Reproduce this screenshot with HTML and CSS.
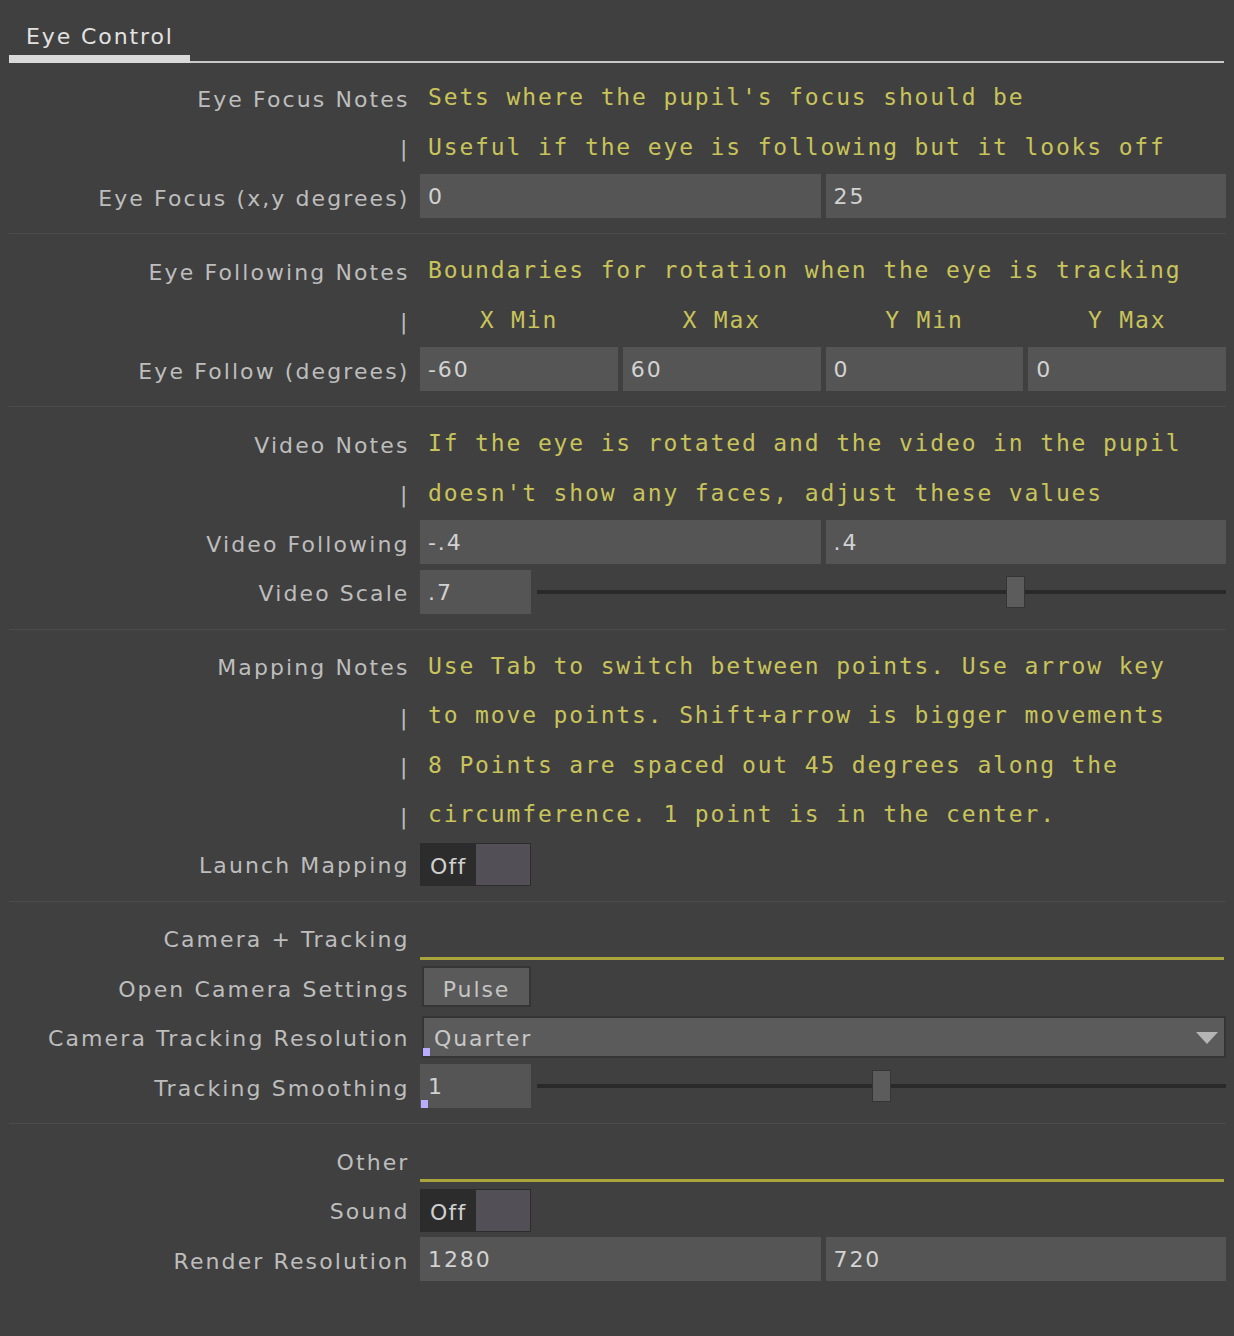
FILE: index.html
```html
<!DOCTYPE html>
<html>
<head>
<meta charset="utf-8">
<link rel="stylesheet" href="styles.css">
</head>
<body>
<div class="panel">
  <div class="tabbar"><div class="tab">Eye Control</div></div>

  <section class="sec">
    <div class="lbl">Eye Focus Notes</div>
    <div class="note">Sets where the pupil's focus should be</div>
    <div class="lbl">|</div>
    <div class="note">Useful if the eye is following but it looks off</div>
    <div class="lbl">Eye Focus (x,y degrees)</div>
    <div class="fields two"><div class="fld">0</div><div class="fld">25</div></div>
  </section>
  <div class="sep"></div>

  <section class="sec">
    <div class="lbl">Eye Following Notes</div>
    <div class="note">Boundaries for rotation when the eye is tracking</div>
    <div class="lbl">|</div>
    <div class="note cols"><span>X Min</span><span>X Max</span><span>Y Min</span><span>Y Max</span></div>
    <div class="lbl">Eye Follow (degrees)</div>
    <div class="fields four"><div class="fld">-60</div><div class="fld">60</div><div class="fld">0</div><div class="fld">0</div></div>
  </section>
  <div class="sep"></div>

  <section class="sec">
    <div class="lbl">Video Notes</div>
    <div class="note">If the eye is rotated and the video in the pupil</div>
    <div class="lbl">|</div>
    <div class="note">doesn't show any faces, adjust these values</div>
    <div class="lbl">Video Following</div>
    <div class="fields two"><div class="fld">-.4</div><div class="fld">.4</div></div>
    <div class="lbl">Video Scale</div>
    <div class="slider">
      <div class="fld">.7</div>
      <div class="track"><div class="handle" style="left:calc((100% - 19px) * 0.7)"></div></div>
    </div>
  </section>
  <div class="sep"></div>

  <section class="sec">
    <div class="lbl">Mapping Notes</div>
    <div class="note">Use Tab to switch between points. Use arrow key</div>
    <div class="lbl">|</div>
    <div class="note">to move points. Shift+arrow is bigger movements</div>
    <div class="lbl">|</div>
    <div class="note">8 Points are spaced out 45 degrees along the</div>
    <div class="lbl">|</div>
    <div class="note">circumference. 1 point is in the center.</div>
    <div class="lbl">Launch Mapping</div>
    <div class="toggle"><span class="tgl-txt">Off</span><span class="tgl-box"></span></div>
  </section>
  <div class="sep"></div>

  <section class="sec">
    <div class="lbl">Camera + Tracking</div>
    <div class="hdrline"></div>
    <div class="lbl">Open Camera Settings</div>
    <div class="pulse">Pulse</div>
    <div class="lbl">Camera Tracking Resolution</div>
    <div class="dropdown"><span class="mark"></span><span class="dd-txt">Quarter</span><span class="tri"></span></div>
    <div class="lbl">Tracking Smoothing</div>
    <div class="slider">
      <div class="fld has-mark"><span class="mark"></span>1</div>
      <div class="track"><div class="handle" style="left:calc((100% - 19px) * 0.5)"></div></div>
    </div>
  </section>
  <div class="sep"></div>

  <section class="sec">
    <div class="lbl">Other</div>
    <div class="hdrline"></div>
    <div class="lbl">Sound</div>
    <div class="toggle"><span class="tgl-txt">Off</span><span class="tgl-box"></span></div>
    <div class="lbl">Render Resolution</div>
    <div class="fields two"><div class="fld">1280</div><div class="fld">720</div></div>
  </section>
</div>
</body>
</html>
```

FILE: styles.css
```css
html, body {
  margin: 0;
  padding: 0;
  background: #404040;
}
body {
  width: 1234px;
  height: 1336px;
  overflow: hidden;
  font-family: "DejaVu Sans", Verdana, sans-serif;
}
.panel {
  padding: 0 8px 0 9px;
}
.tabbar {
  height: 63px;
  box-sizing: border-box;
  display: flex;
  align-items: flex-end;
  border-bottom: 2px solid #c8c8c8;
  margin-right: 2px;
  margin-bottom: 11px;
}
.tab {
  width: 181px;
  box-sizing: border-box;
  padding: 0 0 4px 17px;
  margin-bottom: -2px;
  border-bottom: 8px solid #d9d9d9;
  color: #e2e2e2;
  font-size: 22px;
  letter-spacing: 1.9px;
  line-height: 28px;
}
.sec {
  display: grid;
  grid-template-columns: 399px 1fr;
  column-gap: 12px;
  grid-auto-rows: 49.5px;
}
.sep {
  height: 1px;
  background: #4c4c4c;
  margin: 10.5px 0 13px;
}
.lbl {
  text-align: right;
  color: #bdbdbd;
  font-size: 22px;
  letter-spacing: 2.1px;
  margin-right: -1.5px;
  line-height: 26px;
  padding-top: 12.5px;
  white-space: nowrap;
}
.note {
  font-family: "DejaVu Sans Mono", "Liberation Mono", monospace;
  font-size: 23px;
  letter-spacing: 1.85px;
  color: #c9c45a;
  line-height: 26px;
  padding-top: 10px;
  padding-left: 8px;
  white-space: nowrap;
}
.note.cols {
  display: grid;
  grid-template-columns: repeat(4, 1fr);
  column-gap: 5px;
  padding-left: 0;
}
.note.cols span {
  text-align: center;
}
.fields {
  display: grid;
  column-gap: 5px;
  align-self: start;
  margin-top: 1px;
}
.fields.two { grid-template-columns: 1fr 1fr; }
.fields.four { grid-template-columns: repeat(4, 1fr); }
.fld {
  height: 44px;
  background: #555555;
  color: #d2d2d2;
  font-size: 22px;
  letter-spacing: 1.9px;
  line-height: 44px;
  padding: 1px 0 0 8px;
  box-sizing: border-box;
  position: relative;
}
.slider {
  display: grid;
  grid-template-columns: 111px 1fr;
  column-gap: 6px;
  align-self: start;
  margin-top: 1px;
}
.track {
  position: relative;
  height: 4px;
  background: #2a2a2a;
  align-self: center;
}
.handle {
  position: absolute;
  top: -14px;
  width: 19px;
  height: 32px;
  box-sizing: border-box;
  background: #5c5c5c;
  border: 1px solid #353535;
}
.toggle {
  align-self: start;
  margin-top: 2px;
  width: 111px;
  height: 43px;
  box-sizing: border-box;
  background: #2c2c2c;
  display: flex;
  align-items: stretch;
  padding: 1px 1px 1px 0;
}
.tgl-txt {
  width: 56px;
  color: #d0d0d0;
  font-size: 22px;
  letter-spacing: 1.2px;
  line-height: 41px;
  padding: 2px 0 0 10px;
  box-sizing: border-box;
}
.tgl-box {
  flex: 1;
  background: #524f56;
}
.hdrline {
  align-self: start;
  height: 42px;
  border-bottom: 3px solid #a9a53c;
  margin-right: 2px;
}
.pulse {
  align-self: start;
  margin-top: 2px;
  margin-left: 2px;
  width: 109px;
  height: 41px;
  box-sizing: border-box;
  background: #5a5a5a;
  border: 2px solid #353535;
  color: #c4c4c4;
  font-size: 22px;
  letter-spacing: 1.9px;
  text-align: center;
  line-height: 37px;
  padding-top: 3px;
}
.dropdown {
  align-self: start;
  margin-top: 2px;
  margin-left: 2px;
  height: 42px;
  box-sizing: border-box;
  background: #5b5b5b;
  border: 2px solid #353535;
  position: relative;
  display: flex;
  align-items: center;
  padding: 3px 0 0 10px;
}
.dd-txt {
  color: #c8c8c8;
  font-size: 22px;
  letter-spacing: 1.9px;
  line-height: 35px;
}
.tri {
  position: absolute;
  right: 6px;
  top: 14px;
  width: 0;
  height: 0;
  border-left: 11px solid transparent;
  border-right: 11px solid transparent;
  border-top: 12px solid #b5b5b5;
}
.mark {
  position: absolute;
  left: 0;
  bottom: 0;
  width: 7px;
  height: 8px;
  background: #b9acff;
}
.dropdown .mark {
  left: -1px;
  bottom: 0;
}
.fld.has-mark .mark {
  left: 1px;
  bottom: 0;
}
```
